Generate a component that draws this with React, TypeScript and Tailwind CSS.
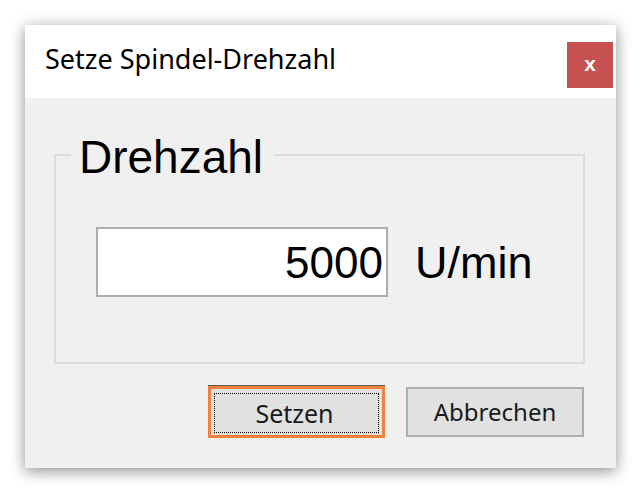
import React from "react";

export default function App() {
  return (
    <div className="w-[640px] h-[494px] bg-white pt-[25px] pl-[25px] overflow-hidden">
      <div className="w-[591px] h-[443px] bg-[#f0f0f0] flex flex-col shadow-[0_3px_14px_rgba(0,0,0,0.45)]">
        {/* Title bar */}
        <div className="h-[73px] bg-white flex items-start shrink-0">
          <span className="ml-[20px] mt-[20px] text-[27px] leading-none text-black font-['Segoe_UI','Noto_Sans',sans-serif] whitespace-nowrap">
            Setze Spindel-Drehzahl
          </span>
          <div className="ml-auto mt-[17px] mr-[3px] w-[46px] h-[46px] bg-[#c75050] flex items-center justify-center">
            <span className="text-white font-bold text-[21px] leading-none font-['Liberation_Sans',Arial,sans-serif] -mt-[3px]">
              x
            </span>
          </div>
        </div>

        {/* Body */}
        <div className="flex-1 flex flex-col pt-[56px] pl-[29px] pr-[31px]">
          <div className="relative h-[210px] border-2 border-[#dcdcdc] pt-[71px] pl-[40px]">
            <span className="absolute top-[-22px] left-[15px] bg-[#f0f0f0] pl-[8px] pr-[11px] text-[46px] leading-none text-black font-['Liberation_Sans',Arial,sans-serif]">
              Drehzahl
            </span>
            <div className="flex items-center">
              <div className="w-[292px] h-[70px] bg-white border-2 border-[#adadad] flex items-center justify-end pr-[3px]">
                <span className="text-[44px] leading-none text-black font-['Liberation_Sans',Arial,sans-serif] mt-[1px]">
                  5000
                </span>
              </div>
              <span className="ml-[27px] text-[45px] leading-none text-black font-['Liberation_Sans',Arial,sans-serif]">
                U/min
              </span>
            </div>
          </div>

          <div className="flex justify-end items-center gap-[21px] mt-[22px] pr-[1px]">
            <div className="w-[177px] h-[52px] border-[3px] border-[#f2813a] shadow-[0_-1px_0_#5a5a5a] bg-[#e1e1e1] p-[3px] pt-[4px] pb-[2px]">
              <div className="w-full h-full border border-dotted border-black flex items-center justify-center">
                <span className="text-[25px] leading-none text-[#1a1a1a] font-['Segoe_UI','Noto_Sans',sans-serif] -ml-[4px]">
                  Setzen
                </span>
              </div>
            </div>
            <div className="w-[178px] h-[50px] border-2 border-[#adadad] bg-[#e1e1e1] flex items-center justify-center">
              <span className="text-[24px] leading-none text-[#1a1a1a] font-['Segoe_UI','Noto_Sans',sans-serif]">
                Abbrechen
              </span>
            </div>
          </div>
        </div>
      </div>
    </div>
  );
}
